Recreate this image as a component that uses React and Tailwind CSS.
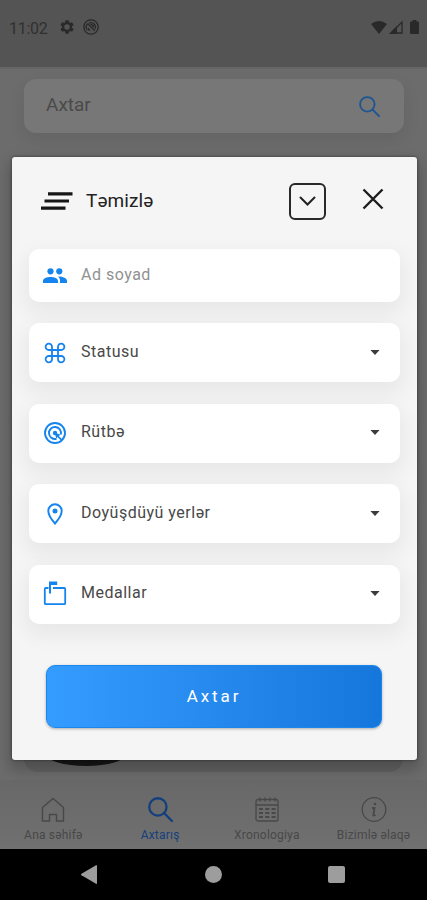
import React from "react";

function SearchIcon({ className, strokeWidth }) {
  return (
    <svg viewBox="0 0 24 24" className={className} fill="none" stroke="currentColor" strokeWidth={strokeWidth} strokeLinecap="round">
      <circle cx="9.5" cy="9.5" r="8.3" />
      <path d="M15.5 15.5L23 23" />
    </svg>
  );
}

function StatusBar() {
  return (
    <div className="flex h-[67px] items-start justify-between bg-[#545454] pl-[9px] pr-[8px] pt-[18px] text-[#292929]">
      <div className="flex h-5 items-center">
        <span className="mt-px w-[50px] whitespace-nowrap text-[16px] leading-5 tracking-[-0.3px] text-[#303030]">11:02</span>
        <svg viewBox="0 0 24 24" className="-mt-0.5 size-4" fill="currentColor">
          <path fillRule="evenodd" d="M19.4 13c.1-.3.1-.7.1-1s0-.7-.1-1l2.200-1.700c.2-.2.300-.4.200-.600l-2-3.500c-.1-.2-.4-.300-.6-.200l-2.500 1c-.5-.4-1.100-.7-1.700-1l-.4-2.600c0-.2-.2-.4-.5-.4h-4c-.300 0-.5.2-.5.4L9.200 5c-.6.300-1.200.6-1.700 1L5 5c-.2-.1-.5 0-.6.200l-2 3.500c-.1.2-.1.5.1.600L4.600 11c-.1.300-.1.700-.1 1s0 .7.1 1l-2.100 1.700c-.2.2-.2.400-.1.600l2 3.500c.1.200.400.300.600.200l2.500-1c.5.400 1.100.700 1.700 1l.400 2.600c0 .200.200.400.500.400h4c.300 0 .500-.200.500-.400l.400-2.600c.600-.300 1.200-.600 1.700-1l2.500 1c.200.100.500 0 .600-.200l2-3.500c.100-.200 0-.500-.200-.600zM12 16a4 4 0 1 1 0-8 4 4 0 0 1 0 8z" />
        </svg>
        <svg viewBox="0 0 16 16" className="-mt-0.5 ml-[8px] size-4" fill="none" stroke="currentColor" strokeWidth="1.3">
          <circle cx="8" cy="8" r="7.200" />
          <path d="M4.200 11A5 5 0 0 1 4.500 4.800M6 4.200A4.400 4.400 0 0 1 12 10M4.500 4.500l7.300 7.300" />
          <path d="M5 8.500L8 11.500H5zM7 5l4 4V6.500L9 5z" fill="currentColor" stroke="none" />
        </svg>
      </div>
      <div className="flex h-[18px] items-center">
        <svg viewBox="0 0 16 13" className="h-[13px] w-4" fill="currentColor">
          <path d="M8 13L0 3Q8-3 16 3z" />
        </svg>
        <svg viewBox="0 0 14 14" className="ml-[2px] size-[14px]">
          <path d="M2 13L13 2v11z" fill="none" stroke="currentColor" strokeWidth="1.300" />
          <path d="M0 14L8 6v8z" fill="currentColor" />
        </svg>
        <svg viewBox="0 0 9 14" className="ml-[7px] h-[14px] w-[9px]" fill="currentColor">
          <path d="M2.500 1.500V0h4v1.500H8a1 1 0 0 1 1 1V13a1 1 0 0 1-1 1H1a1 1 0 0 1-1-1V2.500a1 1 0 0 1 1-1z" />
        </svg>
      </div>
    </div>
  );
}

function Tab({ icon, label, active }) {
  return (
    <div className={active ? "flex w-[107px] flex-col items-center text-[#153f7c]" : "flex w-[107px] flex-col items-center text-[#484848]"}>
      {icon}
      <span className="mt-[5px] whitespace-nowrap text-[12px] leading-[15px] tracking-[0.2px]">{label}</span>
    </div>
  );
}

function TabBar() {
  return (
    <div className="flex h-[69px] bg-linear-to-b from-[#686868] to-[#707070] pt-[17px]">
      <Tab
        label="Ana səhifə"
        icon={
          <svg viewBox="0 0 26 26" className="size-[26px]" fill="none" stroke="currentColor" strokeWidth="1.400">
            <path d="M2.500 10.500L13 1.500 23.500 10.500v13.500H16.500v-6.500h-7v6.500H2.500z" />
          </svg>
        }
      />
      <Tab active label="Axtarış" icon={<SearchIcon strokeWidth="2.200" className="-mt-px h-[27px] w-[25px]" />} />
      <Tab
        label="Xronologiya"
        icon={
          <svg viewBox="0 0 26 26" className="size-[26px]" fill="none" stroke="currentColor" strokeWidth="1.300">
            <rect x="2" y="2.500" width="22" height="21.500" rx="2" />
            <path d="M2 8h22M6 .5v4M11 .5v4M16 .5v4M21 .5v4" />
            <path strokeWidth="2" strokeDasharray="4 2.300" d="M5 12h17M5 16h17M5 20h17" />
          </svg>
        }
      />
      <Tab
        label="Bizimlə əlaqə"
        icon={
          <svg viewBox="0 0 26 26" className="size-[26px]" fill="none" stroke="currentColor" strokeWidth="1.300">
            <circle cx="13" cy="12.500" r="11.800" />
            <circle cx="14" cy="7" r="1.300" fill="currentColor" stroke="none" />
            <path strokeWidth="1.800" d="M11 11h2.500L12.300 18q0 1.200 2.200 0" />
          </svg>
        }
      />
    </div>
  );
}

function SystemNav() {
  return (
    <div className="flex h-[51px] items-center justify-between bg-black pl-[81px] pr-[82px] text-[#9d9d9d]">
      <svg viewBox="0 0 17 19" className="h-[19px] w-[17px]" fill="currentColor">
        <path d="M16 .5v18a.8.8 0 0 1-1 .3L.5 10.200q-1-.7 0-1.400L15 .3q1-.4 1 .2z" />
      </svg>
      <div className="size-[17px] rounded-full bg-[#9d9d9d]" />
      <div className="size-[17px] rounded-[2px] bg-[#9d9d9d]" />
    </div>
  );
}

const iconClass = "size-6 text-[#1584ee]";

const selects = [
  {
    label: "Statusu",
    icon: (
      <svg viewBox="0 0 24 24" className={iconClass} fill="none" stroke="currentColor" strokeWidth="1.800">
        <path d="M9 9h6v6H9zM9 9H6a3.200 3.200 0 1 1 3-3zM15 9h3a3.200 3.200 0 1 0-3-3zM9 15H6a3.200 3.200 0 1 0 3 3zM15 15h3a3.200 3.200 0 1 1-3 3z" />
      </svg>
    ),
  },
  {
    label: "Rütbə",
    icon: (
      <svg viewBox="0 0 24 24" className={iconClass} fill="none" stroke="currentColor" strokeWidth="1.900">
        <circle cx="12" cy="12" r="10" />
        <path d="M13.500 17.800A6 6 0 1 1 17.800 13.500" />
        <circle cx="12" cy="12" r="2.200" fill="currentColor" stroke="none" />
        <path d="M11.500 11.500l6.200 2.200-2 1.200 3.700 3.700-1.200 1.200-3.800-3.800-1 1.800z" fill="currentColor" stroke="none" />
      </svg>
    ),
  },
  {
    label: "Doyüşdüyü yerlər",
    icon: (
      <svg viewBox="0 0 24 24" className={iconClass} fill="none" stroke="currentColor" strokeWidth="1.900">
        <path d="M12 21.500C7.500 16.500 5.300 12.700 5.300 9a6.700 6.700 0 0 1 13.400 0c0 3.700-2.200 7.500-6.700 12.500z" />
        <circle cx="12" cy="9" r="2.500" fill="currentColor" stroke="none" />
      </svg>
    ),
  },
  {
    label: "Medallar",
    icon: (
      <svg viewBox="0 0 24 24" className={iconClass + " overflow-visible"} fill="none" stroke="currentColor" strokeWidth="1.800">
        <path d="M5.500 6H2.800a1 1 0 0 0-1 1v14.200a1 1 0 0 0 1 1h18.400a1 1 0 0 0 1-1V7a1 1 0 0 0-1-1H10" />
        <path d="M6 11.500V-.5H14.200v3.500H8V11.500z" fill="currentColor" stroke="none" />
      </svg>
    ),
  },
];

const fieldClass =
  "flex items-center rounded-[10px] bg-white pl-[14px] pr-[19px] shadow-[0_8px_20px_4px_rgba(0,0,0,0.055)]";

function SelectField({ label, icon }) {
  return (
    <div className={fieldClass + " h-[59px]"}>
      {icon}
      <span className="-mt-[2px] ml-[14px] flex-1 text-[16px] leading-5 tracking-[0.5px] text-[#484848]">{label}</span>
      <svg viewBox="0 0 12 6" className="mb-px mr-px h-[5px] w-[10px]" fill="#3b3b3b">
        <path d="M.5 0h11L6 6z" />
      </svg>
    </div>
  );
}

function FilterDialog() {
  return (
    <div className="absolute left-[12px] top-[157px] h-[602.500px] w-[404.500px] rounded-[3px] bg-[#f5f5f5] pl-[17px] pr-[17px] shadow-[0_8px_14px_3px_rgba(0,0,0,0.2),0_0_3px_rgba(0,0,0,0.5)]">
      <div className="flex h-[92px] items-center pl-[12px] pr-[15px]">
        <svg viewBox="0 0 32 18" className="-mt-[4px] h-[18px] w-8" stroke="#161616" strokeWidth="3.200">
          <path d="M7 1.900h24.500M3.500 9h24.500M0 16.100h24.500" />
        </svg>
        <span className="-mt-[4px] ml-[13px] text-[19px] leading-6 tracking-[0.1px] text-[#222]">Təmizlə</span>
        <div className="-mt-[4px] ml-auto flex size-[37px] items-center justify-center rounded-[6px] border-2 border-[#292929]">
          <svg viewBox="0 0 17 10" className="h-[10px] w-[17px]" fill="none" stroke="#222" strokeWidth="2" strokeLinecap="round">
            <path d="M1.500 1.500l7 7 7-7" />
          </svg>
        </div>
        <svg viewBox="0 0 22 22" className="-mt-[9px] ml-[36px] mr-[0.500px] size-[22px]" fill="none" stroke="#1c1c1c" strokeWidth="2.400">
          <path d="M1.500 1.500l19 19M20.500 1.500l-19 19" />
        </svg>
      </div>
      <div className={fieldClass + " h-[53px]"}>
        <svg viewBox="0 0 24 16" className="h-4 w-6 text-[#1584ee]" fill="currentColor">
          <circle cx="7.500" cy="3.300" r="3.100" />
          <circle cx="16.300" cy="3.300" r="3.100" />
          <path d="M0 15v-2c0-5.300 15-5.300 15 0v2zM15.200 8.500C20 8.500 24 10 24 13v2h-7v-2.200c0-1.800-.7-3.200-1.800-4.300z" />
        </svg>
        <span className="-mt-px ml-[14px] text-[16px] leading-5 tracking-[0.5px] text-[#919191]">Ad soyad</span>
      </div>
      <div className="mt-[21px] flex flex-col gap-[21.500px]">
        {selects.map((field) => (
          <SelectField key={field.label} label={field.label} icon={field.icon} />
        ))}
      </div>
      <button className="mx-[17px] mt-[41.500px] flex h-[63px] w-[336px] items-center justify-center rounded-[9px] border border-[#1b86ec] bg-linear-to-r from-[#359cff] to-[#1576dc] pt-px text-[17px] tracking-[2.900px] text-white shadow-[0_1px_3px_rgba(0,0,0,0.3)]">
        Axtar
      </button>
    </div>
  );
}

export default function App() {
  return (
    <div className="relative flex h-[900px] w-[427px] flex-col overflow-hidden bg-[#6c6c6c] font-[Roboto,sans-serif]">
      <StatusBar />
      <main className="flex flex-1 flex-col justify-between overflow-hidden border-t-2 border-[#666] bg-[#6c6c6c] px-[24px] pt-[10px]">
        <div className="flex h-[54px] w-[380px] items-center justify-between rounded-[12px] bg-[#777] pl-[22px] pr-[24px] shadow-[0_7px_18px_rgba(0,0,0,0.08)]">
          <span className="-mt-[2px] text-[19px] leading-6 text-[#4a4a4a]">Axtar</span>
          <SearchIcon strokeWidth="2.100" className="size-[21px] text-[#1c5592]" />
        </div>
        <div className="mb-[8px] flex h-[60px] items-end overflow-hidden rounded-[14px] bg-[#626262] pb-[6px] pl-[22px]">
          <div className="h-[100px] w-[80px] shrink-0 rounded-[50%/12%] bg-[#161616]" />
        </div>
      </main>
      <TabBar />
      <SystemNav />
      <FilterDialog />
    </div>
  );
}
